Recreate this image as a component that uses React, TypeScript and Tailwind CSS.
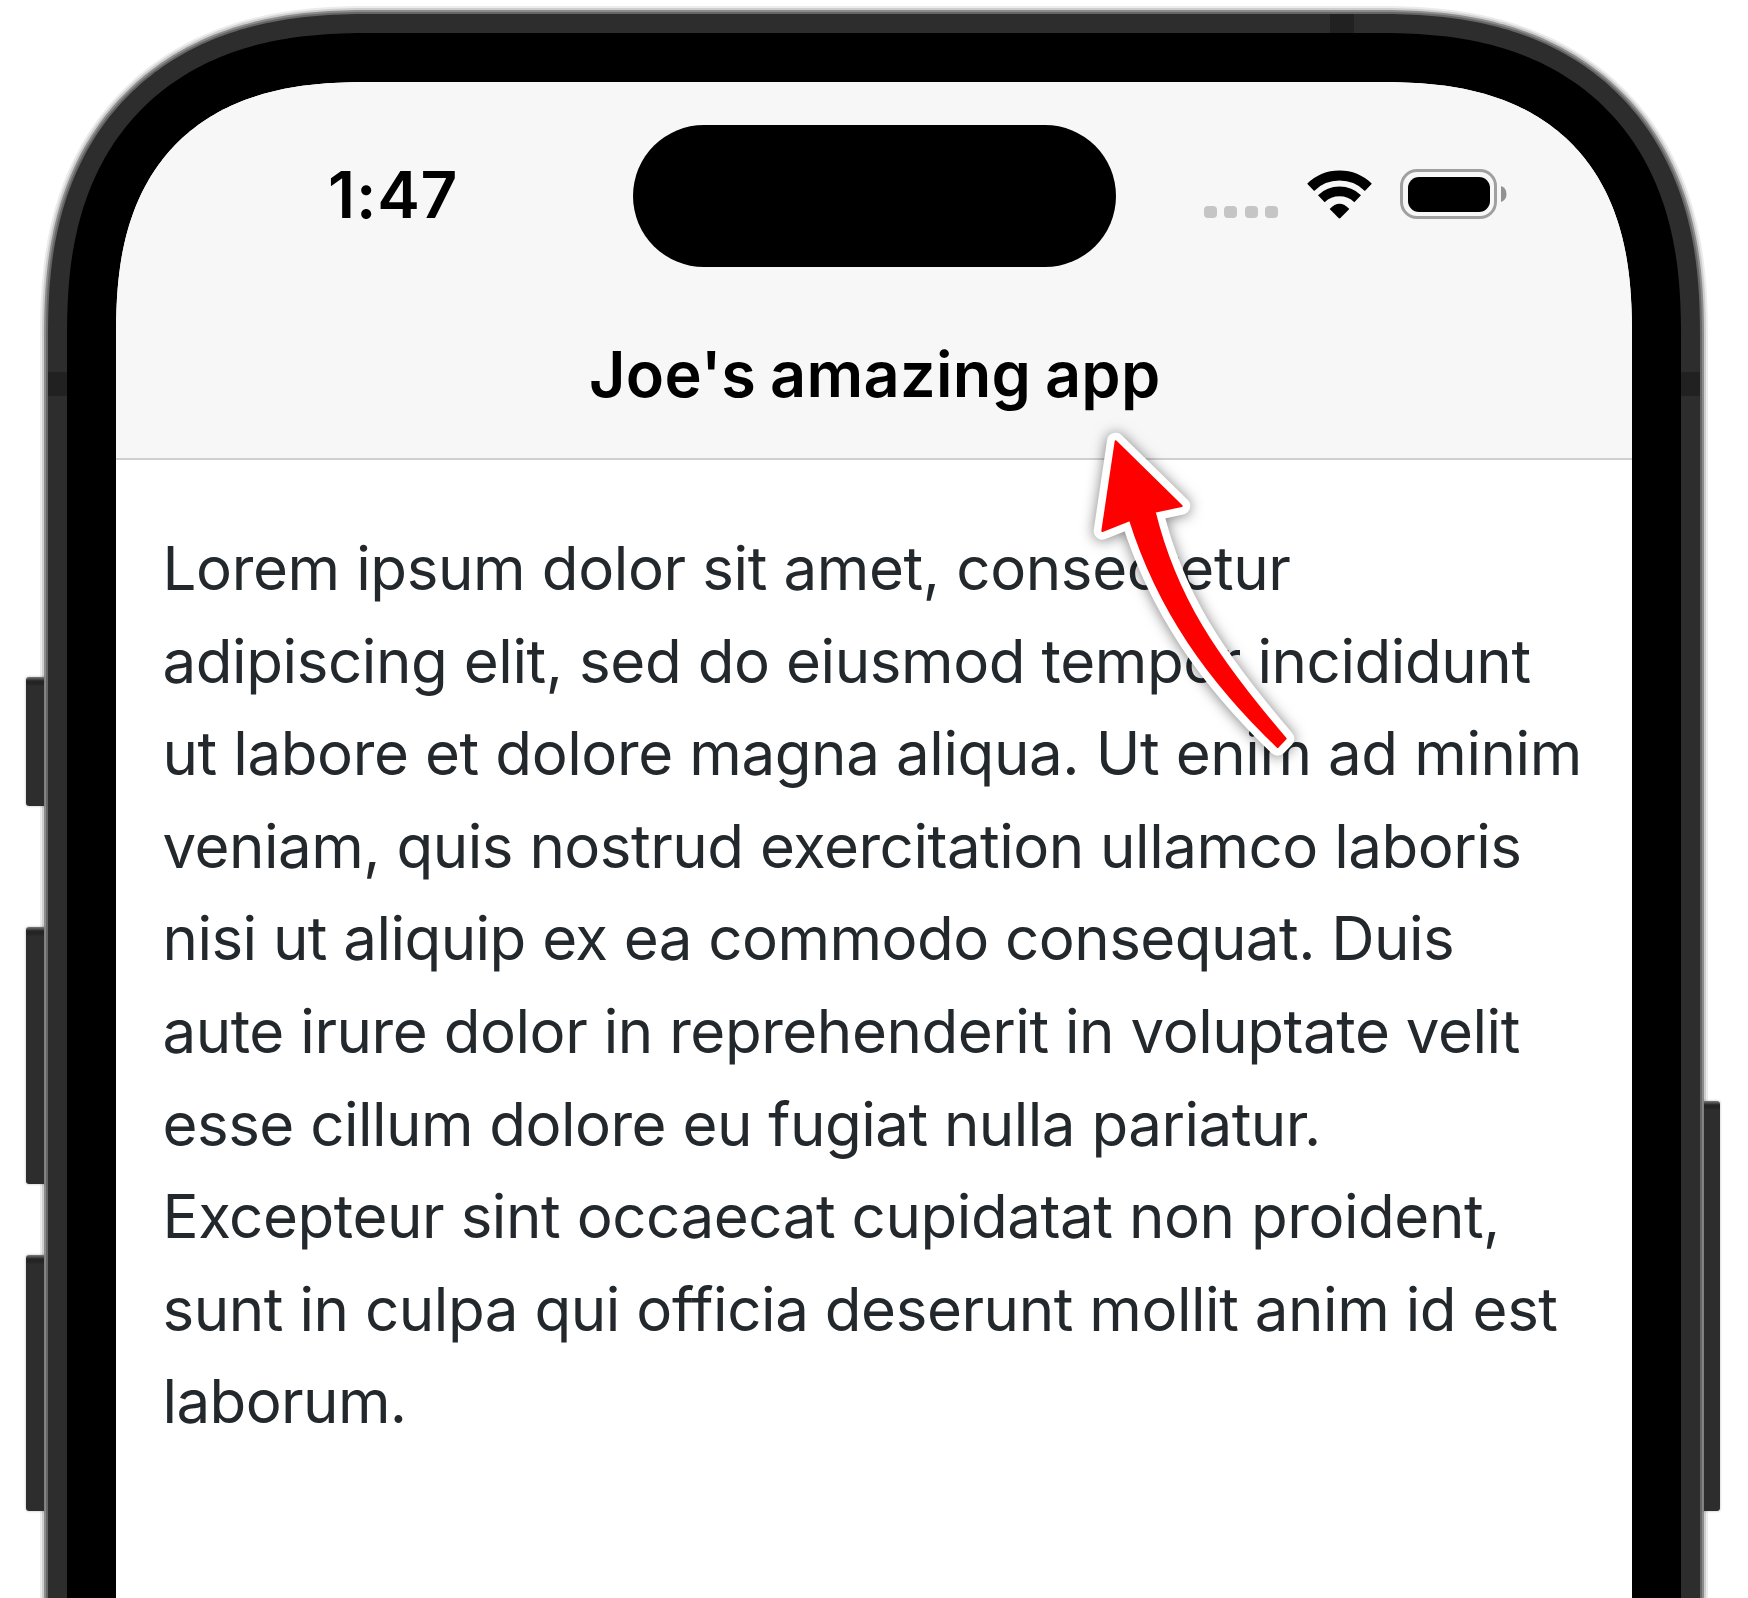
import type { ReactNode } from "react";

const BODY_LINES = [
  { text: "Lorem ipsum dolor sit amet, consectetur", tracking: "tracking-[-0.371px]" },
  { text: "adipiscing elit, sed do eiusmod tempor incididunt", tracking: "tracking-[-0.415px]" },
  { text: "ut labore et dolore magna aliqua. Ut enim ad minim", tracking: "tracking-[-0.39px]" },
  { text: "veniam, quis nostrud exercitation ullamco laboris", tracking: "tracking-[-0.485px]" },
  { text: "nisi ut aliquip ex ea commodo consequat. Duis", tracking: "tracking-[-0.532px]" },
  { text: "aute irure dolor in reprehenderit in voluptate velit", tracking: "tracking-[-0.447px]" },
  { text: "esse cillum dolore eu fugiat nulla pariatur.", tracking: "tracking-[-0.509px]" },
  { text: "Excepteur sint occaecat cupidatat non proident,", tracking: "tracking-[-0.43px]" },
  { text: "sunt in culpa qui officia deserunt mollit anim id est", tracking: "tracking-[-0.438px]" },
  { text: "laborum.", tracking: "tracking-[-0.6px]" },
];

const SCREEN_WIDTH = 1516;
const CORNER_SIZE = 260;
const CORNER_EXPONENT = 2.59;

/** Squircle-cornered outline of the screen, grown outwards by the given offset. */
function outline(offset: number): string {
  const width = SCREEN_WIDTH + 2 * offset;
  const steps = 96;
  const corner: [number, number][] = [];
  for (let i = 0; i <= steps; i++) {
    const t = (i / steps) * (Math.PI / 2);
    const u = Math.pow(Math.cos(t), 2 / CORNER_EXPONENT);
    const v = Math.pow(Math.sin(t), 2 / CORNER_EXPONENT);
    const nx = Math.pow(u, CORNER_EXPONENT - 1);
    const ny = Math.pow(v, CORNER_EXPONENT - 1);
    const len = Math.hypot(nx, ny);
    corner.push([
      CORNER_SIZE * (1 - u) + offset * (1 - nx / len),
      CORNER_SIZE * (1 - v) + offset * (1 - ny / len),
    ]);
  }
  const left = corner.map(([x, y]) => `${x.toFixed(2)} ${y.toFixed(2)}`);
  const right = [...corner].reverse().map(([x, y]) => `${(width - x).toFixed(2)} ${y.toFixed(2)}`);
  return `path("M0 1700L${left.join("L")}L${right.join("L")}L${width} 1700Z")`;
}

function Shell({ offset, className, children }: { offset: number; className: string; children: ReactNode }) {
  return (
    <div className={`h-full ${className}`} style={{ clipPath: outline(offset) }}>
      {children}
    </div>
  );
}

function SideButton({ side, className }: { side: "left" | "right"; className: string }) {
  return (
    <div
      className={`shrink-0 bg-[linear-gradient(to_bottom,#777_0,#242424_4px,#242424_7px,#2d2d2d_9px)] shadow-[0_0_2px_1px_rgba(0,0,0,0.13)] ${
        side === "left" ? "ml-auto w-[18px] rounded-l-[3px]" : "w-4 rounded-r-[3px]"
      } ${className}`}
    />
  );
}

function Signal() {
  return (
    <div className="flex gap-[7.7px]">
      {[0, 1, 2, 3].map((i) => (
        <span key={i} className="size-[12.8px] rounded-[4px] bg-[#c5c5c5]" />
      ))}
    </div>
  );
}

function Wifi() {
  return (
    <svg className="h-[49px] w-[65px]" viewBox="0 0 195 147" fill="none">
      <path d="M11 52 A124 124 0 0 1 184 52" stroke="#000" strokeWidth="30" />
      <path d="M43 86 A79 79 0 0 1 152 86" stroke="#000" strokeWidth="29" />
      <path d="M68 117 Q97.500 85 127 117 L101 143.500 Q97.500 147 94 143.500Z" fill="#000" />
    </svg>
  );
}

function Battery() {
  return (
    <div className="flex items-center">
      <div className="h-[50px] w-[97px] rounded-[17px] border-[3px] border-[#a0a0a0] p-[4.500px]">
        <div className="h-full w-full rounded-[11px] bg-black" />
      </div>
      <svg className="ml-[4px] h-4 w-[5.500px]" viewBox="0 0 5.5 16">
        <path d="M0 0Q5.500 2 5.500 8Q5.500 14 0 16Z" fill="#929292" />
      </svg>
    </div>
  );
}

function Arrow() {
  const shape =
    "M167 94L365 288L284 305C346 558 466 740 677 986L653 1011C446 812 295 600 210 330L127 363Z";
  return (
    <svg
      className="absolute top-[410px] left-[1060px] h-[370px] w-[280px] overflow-visible drop-shadow-[0_1px_7px_rgba(0,0,0,0.5)]"
      viewBox="0 0 840 1110"
      strokeLinejoin="round"
    >
      <path d={shape} fill="#fff" stroke="#fff" strokeWidth="52" />
      <path d={shape} fill="#f00" stroke="#f00" strokeWidth="6" />
    </svg>
  );
}

export default function App() {
  return (
    <div className="relative flex h-[1598px] w-[1748px] overflow-hidden bg-white font-['Inter',sans-serif]">
      <div className="z-10 flex w-11 shrink-0 flex-col pt-[677px]">
        <SideButton side="left" className="h-[129px]" />
        <SideButton side="left" className="mt-[121px] h-[257px]" />
        <SideButton side="left" className="mt-[71px] h-[256px]" />
      </div>

      <div className="-mx-1 h-full w-[1668px] shrink-0 pt-1.5">
        <Shell offset={76} className="bg-[#ececec] px-0.5 pt-0.5">
          <Shell offset={74} className="bg-[#cecece] px-0.5 pt-0.5">
            <Shell offset={72} className="bg-[#8c8c8c] px-0.5 pt-0.5">
              <Shell offset={70} className="bg-[#666] px-0.5 pt-0.5">
                <Shell offset={68} className="relative bg-[#2d2d2d] px-[19px] pt-[19px]">
                  <span className="absolute top-0 left-[1282px] h-[19px] w-6 bg-[#212121]" />
                  <span className="absolute top-[358px] left-0 h-6 w-[19px] bg-[#212121]" />
                  <span className="absolute top-[358px] right-0 h-6 w-[19px] bg-[#212121]" />
                  <Shell offset={49} className="bg-black px-[49px] pt-[49px]">
                    <Shell offset={0} className="bg-white">
                      <header className="h-[378px] border-b-2 border-[#d0d0d0] bg-[#f7f7f7]">
                        <div className="flex h-[254px] items-start">
                          <div className="mt-[74px] ml-[212px] w-[304.700px] shrink-0 text-[64px] leading-[78px] font-semibold tracking-[0.83px] text-black">
                            1:47
                          </div>
                          <div className="mt-[42.600px] h-[142.700px] w-[483.300px] shrink-0 rounded-full bg-black" />
                          <div className="mt-[123.700px] ml-[88px]">
                            <Signal />
                          </div>
                          <div className="mt-[88px] ml-[29px]">
                            <Wifi />
                          </div>
                          <div className="mt-[87.300px] ml-[28px]">
                            <Battery />
                          </div>
                        </div>
                        <h1 className="pl-[473px] text-[63px] leading-[76px] font-semibold tracking-[0.3px] whitespace-nowrap text-black [word-spacing:-2.500px]">
                          Joe's amazing app
                        </h1>
                      </header>
                      <main className="pt-[62px] pl-[46.500px] text-[60px] leading-[92.6px] whitespace-nowrap text-[#23282c]">
                        {BODY_LINES.map((line) => (
                          <p key={line.text} className={line.tracking}>
                            {line.text}
                          </p>
                        ))}
                      </main>
                    </Shell>
                  </Shell>
                </Shell>
              </Shell>
            </Shell>
          </Shell>
        </Shell>
      </div>

      <div className="z-10 flex w-11 shrink-0 flex-col pt-[1101px]">
        <SideButton side="right" className="h-[410px]" />
      </div>

      <Arrow />
    </div>
  );
}
